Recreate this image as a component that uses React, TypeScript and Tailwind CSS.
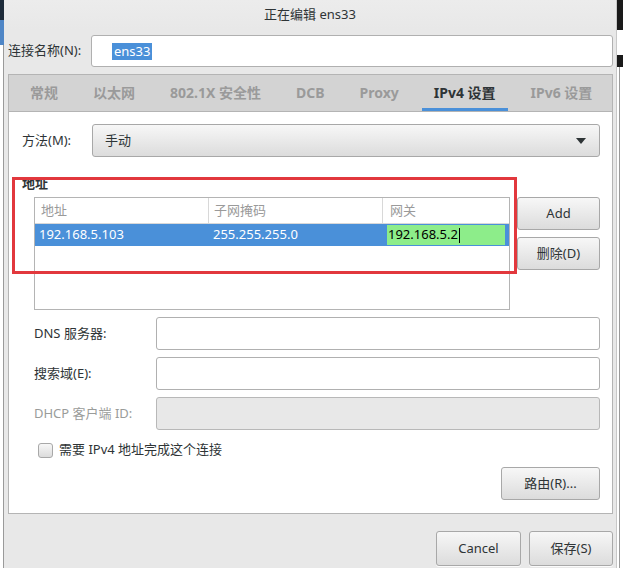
import React from "react";

const font = { fontFamily: '"Noto Sans", "Noto Sans CJK SC", sans-serif' };

function Btn({ children, className = "" }: { children: React.ReactNode; className?: string }) {
  return (
    <div
      className={
        "flex items-center justify-center rounded-[3px] border border-[#a8a8a8] bg-gradient-to-b from-[#f7f7f7] to-[#dcdcdc] text-[13px] text-[#2e3436] shadow-[0_1px_0_rgba(255,255,255,0.8)] " +
        className
      }
    >
      {children}
    </div>
  );
}

function Field({ label, disabled = false }: { label: string; disabled?: boolean }) {
  return (
    <div className="flex items-center h-[33px]">
      <div className={"w-[122px] text-[13px] " + (disabled ? "text-[#9a9c9a]" : "text-[#2e3436]")}>{label}</div>
      <div
        className={
          "flex-1 h-full rounded-[3px] border " +
          (disabled ? "border-[#b8b8b8] bg-[#e8e8e8]" : "border-[#b0b0b0] bg-white")
        }
      />
    </div>
  );
}

const tabs = ["常规", "以太网", "802.1X 安全性", "DCB", "Proxy", "IPv4 设置", "IPv6 设置"];

export default function App() {
  return (
    <div className="w-[623px] h-[568px] flex overflow-hidden bg-white" style={font}>
      {/* left desktop strip */}
      <div className="w-[4px] flex flex-col">
        <div className="h-[20px] bg-[#1d2b3a]" />
        <div className="h-[25px] bg-[#4f86c6]" />
        <div className="flex-1 bg-white border-r border-[#9a9a9a]" />
      </div>

      {/* dialog */}
      <div className="w-[612px] h-full bg-[#e8e8e8] flex flex-col">
        {/* title */}
        <div className="h-[30px] flex items-center justify-center text-[13px] text-[#2e3436] bg-gradient-to-b from-[#ececec] to-[#e8e8e8]">
          正在编辑 ens33
        </div>

        {/* name row */}
        <div className="mt-[5px] h-[32px] flex items-center pl-[4px] pr-[3px]">
          <div className="w-[83px] text-[13px] text-[#2e3436]">连接名称(N):</div>
          <div className="flex-1 h-full bg-white border border-[#b0b0b0] rounded-[3px] flex items-center pl-[20px]">
            <span className="bg-[#4a90d9] text-white text-[13px] leading-[17px] px-[2px]">ens33</span>
          </div>
        </div>

        {/* notebook */}
        <div className="mt-[7px] ml-[4px] mr-[3px] border border-[#b4b4b4] flex flex-col h-[440px]">
          <div className="h-[37px] bg-[#d3d3d3] flex items-stretch pl-[9px] gap-[11px] border-b border-[#b4b4b4]">
            {tabs.map((t) => {
              const active = t === "IPv4 设置";
              return (
                <div
                  key={t}
                  className={
                    "px-[12px] pb-[2px] flex items-center text-[14px] font-bold relative " +
                    (active ? "text-[#2e3436]" : "text-[#9a9a9a]")
                  }
                >
                  {t}
                  {active && <div className="absolute left-0 right-0 bottom-0 h-[3px] bg-[#4a90d9]" />}
                </div>
              );
            })}
          </div>

          <div className="flex-1 bg-white relative pl-[13px] pr-[12px] pt-[12px]">
            {/* method */}
            <div className="flex items-center h-[33px]">
              <div className="w-[70px] text-[13px] text-[#2e3436]">方法(M):</div>
              <Btn className="flex-1 h-full !justify-between px-[12px]">
                <span>手动</span>
                <svg width="10" height="6" viewBox="0 0 10 6" className="mr-[1px]">
                  <path d="M0 0 L10 0 L5 6 Z" fill="#2e3436" />
                </svg>
              </Btn>
            </div>

            {/* address section */}
            <div className="mt-[17px] text-[13px] font-bold text-[#2e3436] leading-[18px]">地址</div>
            <div className="mt-[5px] flex pl-[12px]">
              <div className="w-[476px] h-[113px] border border-[#b4b4b4] bg-white flex flex-col">
                <div className="h-[26px] flex text-[13px] text-[#9a9a9a] border-b border-[#d8d8d8]">
                  <div className="w-[174px] pl-[6px] flex items-center border-r border-[#d8d8d8]">地址</div>
                  <div className="w-[174px] pl-[5px] flex items-center border-r border-[#d8d8d8]">子网掩码</div>
                  <div className="flex-1 pl-[7px] flex items-center">网关</div>
                </div>
                <div className="h-[22px] bg-[#4a90d9] flex text-[13px] text-white">
                  <div className="w-[174px] pl-[4px] flex items-center">192.168.5.103</div>
                  <div className="w-[174px] pl-[4px] flex items-center">255.255.255.0</div>
                  <div className="flex-1 flex items-center pl-[4px] pr-[4px] py-[1px]">
                    <div className="h-full w-full bg-[#8ded8a] text-black flex items-center pl-[1px]">
                      192.168.5.2<span className="inline-block w-[1px] h-[15px] bg-black ml-[1px]" />
                    </div>
                  </div>
                </div>
              </div>
              <div className="flex-1 flex flex-col gap-[7px] pl-[7px]">
                <Btn className="h-[33px]">Add</Btn>
                <Btn className="h-[33px]">删除(D)</Btn>
              </div>
            </div>

            {/* red highlight */}
            <div className="absolute left-[3px] top-[65px] w-[505px] h-[97px] border-[3px] border-[#e2383d]" />

            {/* fields */}
            <div className="mt-[7px] pl-[12px] flex flex-col gap-[7px]">
              <Field label="DNS 服务器:" />
              <Field label="搜索域(E):" />
              <Field label="DHCP 客户端 ID:" disabled />
            </div>

            <div className="mt-[12px] ml-[16px] flex items-center gap-[6px] h-[16px]">
              <div className="w-[15px] h-[15px] rounded-[3px] border border-[#a8a8a8] bg-gradient-to-b from-[#f7f7f7] to-[#dcdcdc]" />
              <span className="text-[13px] text-[#2e3436]">需要 IPv4 地址完成这个连接</span>
            </div>

            <div className="mt-[9px] flex justify-end">
              <Btn className="w-[99px] h-[33px]">路由(R)...</Btn>
            </div>
          </div>
        </div>

        {/* bottom buttons */}
        <div className="flex-1 flex items-end justify-end gap-[8px] pr-[3px] pb-[2px]">
          <Btn className="w-[85px] h-[35px]">Cancel</Btn>
          <Btn className="w-[84px] h-[35px]">保存(S)</Btn>
        </div>
      </div>

      {/* right desktop strip */}
      <div className="flex-1 flex flex-col border-l border-[#c8c8c8]">
        <div className="h-[30px] bg-[#1a1a1a]" />
        <div className="h-[25px] bg-white" />
        <div className="h-[12px] bg-[#1a1a1a]" />
        <div className="flex-1 bg-white border-l border-[#9a9a9a] ml-[2px]" />
      </div>
    </div>
  );
}
